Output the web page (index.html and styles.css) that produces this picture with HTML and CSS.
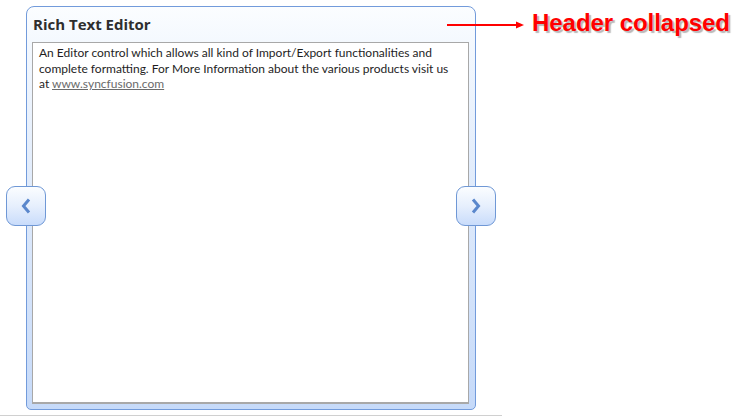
FILE: index.html
```
<!DOCTYPE html>
<html>
<head>
<meta charset="utf-8">
<link rel="stylesheet" href="styles.css">
</head>
<body>
<div class="stage">
  <div class="panel">
    <div class="header">Rich Text Editor</div>
    <div class="content">
      <p>An Editor control which allows all kind of Import/Export functionalities and complete formatting. For More Information about the various products visit us at <a href="#">www.syncfusion.com</a></p>
    </div>
  </div>
  <button class="nav nav-prev" aria-label="Previous">
    <svg width="10" height="16" viewBox="0 0 10 16"><path d="M8 1.5 L2.5 8 L8 14.5" fill="none" stroke="#5a87cc" stroke-width="3" stroke-linejoin="miter"/></svg>
  </button>
  <button class="nav nav-next" aria-label="Next">
    <svg width="10" height="16" viewBox="0 0 10 16"><path d="M2 1.5 L7.5 8 L2 14.5" fill="none" stroke="#5a87cc" stroke-width="3" stroke-linejoin="miter"/></svg>
  </button>
  <div class="callout">
    <svg class="arrow" width="78" height="10" viewBox="0 0 78 10"><line x1="0" y1="5" x2="70" y2="5" stroke="#f00" stroke-width="2"/><path d="M69 1.5 L77 5 L69 8.5 Z" fill="#f00"/></svg>
    <span class="callout-text">Header collapsed</span>
  </div>
</div>
<div class="baseline"></div>
</body>
</html>
```
FILE: styles.css
```
html, body {
  margin: 0;
  padding: 0;
  background: #fff;
}
body {
  width: 741px;
  height: 417px;
  overflow: hidden;
}
.stage {
  position: relative;
  display: flex;
  padding: 6px 0 0 26px;
  height: 404px;
}
.panel {
  box-sizing: border-box;
  width: 450px;
  height: 404px;
  border: 1px solid #729bdb;
  border-radius: 8px 8px 5px 5px;
  background: linear-gradient(to bottom, #fbfdff 0%, #f3f8fe 10%, #dde9fb 50%, #c6daf9 100%);
  display: flex;
  flex-direction: column;
  padding: 0 6px 5px 5px;
}
.header {
  height: 35px;
  flex: none;
  display: flex;
  align-items: center;
  padding: 0 0 2px 1px;
  box-sizing: border-box;
  font-family: "Open Sans", "Noto Sans", sans-serif;
  font-weight: 700;
  font-size: 15px;
  color: #2e2e2e;
}
.content {
  flex: 1;
  background: #fff;
  border: 1px solid #a8a8a8;
  border-bottom-width: 2px;
  padding: 2px 12px 2px 6px;
}
.content p {
  margin: 0;
  font-family: "Lato", "Open Sans", sans-serif;
  font-size: 12px;
  line-height: 15.5px;
  color: #1e1e1e;
}
.content a {
  color: #6b6b6b;
  text-decoration: underline;
}
.nav {
  position: absolute;
  top: 186px;
  width: 40px;
  height: 40px;
  box-sizing: border-box;
  border: 1px solid #6f98d6;
  border-radius: 9px;
  background: linear-gradient(to bottom, #fbfdff 0%, #e6effd 50%, #c9dcfb 100%);
  display: flex;
  align-items: center;
  justify-content: center;
  padding: 0;
}
.nav-prev { left: 6px; }
.nav-next { left: 456px; }
.callout {
  position: absolute;
  left: 447px;
  top: 9px;
  display: flex;
  align-items: center;
  gap: 7px;
}
.arrow {
  margin-top: 3px;
}
.callout-text {
  font-family: "Liberation Sans", Arial, sans-serif;
  font-weight: 700;
  font-size: 24px;
  letter-spacing: -0.05px;
  color: #ff0000;
  text-shadow: 2px 2px 1px #b8b8b8;
  white-space: nowrap;
}
.baseline {
  margin-top: 5px;
  width: 502px;
  height: 1px;
  background: #d0d0d0;
}
```
